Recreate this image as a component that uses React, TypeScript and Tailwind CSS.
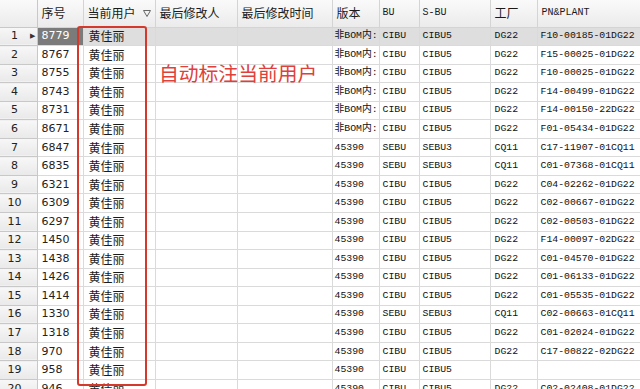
import React from 'react';

const rows: string[][] = [
  ['8779', '非BOM内:', 'CIBU', 'CIBU5', 'DG22', 'F10-00185-01DG22'],
  ['8767', '非BOM内:', 'CIBU', 'CIBU5', 'DG22', 'F15-00025-01DG22'],
  ['8755', '非BOM内:', 'CIBU', 'CIBU5', 'DG22', 'F10-00025-01DG22'],
  ['8743', '非BOM内:', 'CIBU', 'CIBU5', 'DG22', 'F14-00499-01DG22'],
  ['8731', '非BOM内:', 'CIBU', 'CIBU5', 'DG22', 'F14-00150-22DG22'],
  ['8671', '非BOM内:', 'CIBU', 'CIBU5', 'DG22', 'F01-05434-01DG22'],
  ['6847', '45390', 'SEBU', 'SEBU3', 'CQ11', 'C17-11907-01CQ11'],
  ['6835', '45390', 'SEBU', 'SEBU3', 'CQ11', 'C01-07368-01CQ11'],
  ['6321', '45390', 'CIBU', 'CIBU5', 'DG22', 'C04-02262-01DG22'],
  ['6309', '45390', 'CIBU', 'CIBU5', 'DG22', 'C02-00667-01DG22'],
  ['6297', '45390', 'CIBU', 'CIBU5', 'DG22', 'C02-00503-01DG22'],
  ['1450', '45390', 'CIBU', 'CIBU5', 'DG22', 'F14-00097-02DG22'],
  ['1438', '45390', 'CIBU', 'CIBU5', 'DG22', 'C01-04570-01DG22'],
  ['1426', '45390', 'CIBU', 'CIBU5', 'DG22', 'C01-06133-01DG22'],
  ['1414', '45390', 'CIBU', 'CIBU5', 'DG22', 'C01-05535-01DG22'],
  ['1330', '45390', 'SEBU', 'SEBU3', 'CQ11', 'C02-00663-01CQ11'],
  ['1318', '45390', 'CIBU', 'CIBU5', 'DG22', 'C01-02024-01DG22'],
  ['970', '45390', 'CIBU', 'CIBU5', 'DG22', 'C17-00822-02DG22'],
  ['958', '45390', 'CIBU', 'CIBU5', '', ''],
  ['946', '45390', 'CIBU', 'CIBU5', 'DG22', 'C02-02408-01DG22'],
];

const sans = "font-['Tahoma','DejaVu_Sans',sans-serif]";
const cjk = "font-['Noto_Sans_CJK_SC',sans-serif]";
const mono = "font-['Liberation_Mono','Noto_Sans_CJK_SC',monospace]";

export default function App() {
  return (
    <div className="relative w-[640px] h-[389px] overflow-hidden bg-white">
      <table className="table-fixed border-collapse w-[640px] leading-[14px]">
        <colgroup>
          <col className="w-[37px]" />
          <col className="w-[46px]" />
          <col className="w-[72px]" />
          <col className="w-[82px]" />
          <col className="w-[95px]" />
          <col className="w-[47px]" />
          <col className="w-[40px]" />
          <col className="w-[71px]" />
          <col className="w-[47px]" />
          <col className="w-[103px]" />
        </colgroup>
        <thead>
          <tr className={`h-[27px] bg-gradient-to-b from-[#fafafa] to-[#ebebeb] text-[12px] text-[#1a1a1a] ${cjk}`}>
            <th className="border-r border-b border-[#c8c8c8]" />
            <th className="border-r border-b border-[#d4d4d4] text-left font-normal pl-[4px]">序号</th>
            <th className="border-r border-b border-[#d4d4d4] text-left font-normal pl-[4px]">
              <div className="flex items-center justify-between pr-[4px]">
                <span>当前用户</span>
                <svg width="8" height="7" viewBox="0 0 8 7"><path d="M0.5 0.5 H7.5 L4 6.5 Z" fill="none" stroke="#666" strokeWidth="1" /></svg>
              </div>
            </th>
            <th className="border-r border-b border-[#d4d4d4] text-left font-normal pl-[4px]">最后修改人</th>
            <th className="border-r border-b border-[#d4d4d4] text-left font-normal pl-[4px]">最后修改时间</th>
            <th className="border-r border-b border-[#d4d4d4] text-left font-normal pl-[4px]">版本</th>
            <th className={`border-r border-b border-[#d4d4d4] text-left font-normal pl-[3px] text-[10px] ${mono}`}>BU</th>
            <th className={`border-r border-b border-[#d4d4d4] text-left font-normal pl-[3px] text-[10px] ${mono}`}>S-BU</th>
            <th className="border-r border-b border-[#d4d4d4] text-left font-normal pl-[4px]">工厂</th>
            <th className={`border-b border-[#d4d4d4] text-left font-normal pl-[4px] text-[10px] ${mono}`}>PN&amp;PLANT</th>
          </tr>
        </thead>
        <tbody>
          {rows.map((r, i) => {
            const sel = i === 0;
            return (
              <tr key={i} className={`h-[18.55px] ${sel ? 'bg-[#dedede]' : ''}`}>
                <td className={`p-0 border-r border-b border-[#c8c8c8] bg-gradient-to-b from-[#f7f7f7] to-[#e9e9e9] text-[11px] text-[#222] ${sans}`}>
                  <div className="relative flex items-center">
                    <span className="w-[29px] text-center">{i + 1}</span>
                    {sel && <span className="absolute left-[30px] text-[7px] text-[#333]">▶</span>}
                  </div>
                </td>
                <td className={`p-0 border-r border-b border-[#dadada] pl-[4px] text-[11px] ${sans} ${sel ? 'bg-[#7b7b7b] text-white' : 'text-[#222]'}`}>{r[0]}</td>
                <td className={`p-0 border-r border-b border-[#dadada] pl-[5px] text-[12px] text-[#1a1a1a] ${cjk}`}>黄佳丽</td>
                <td className="p-0 border-r border-b border-[#dadada]" />
                <td className="p-0 border-r border-b border-[#dadada]" />
                <td className={`p-0 border-r border-b border-[#dadada] pl-[2px] text-[9.8px] text-[#111] whitespace-nowrap overflow-hidden ${mono}`}>{r[1]}</td>
                <td className={`p-0 border-r border-b border-[#dadada] pl-[3px] text-[9.8px] text-[#111] ${mono}`}>{r[2]}</td>
                <td className={`p-0 border-r border-b border-[#dadada] pl-[3px] text-[9.8px] text-[#111] ${mono}`}>{r[3]}</td>
                <td className={`p-0 border-r border-b border-[#dadada] pl-[4px] text-[9.8px] text-[#111] ${mono}`}>{r[4]}</td>
                <td className={`p-0 border-b border-[#dadada] pl-[3px] text-[9.8px] text-[#111] whitespace-nowrap ${mono}`}>{r[5]}</td>
              </tr>
            );
          })}
        </tbody>
      </table>
      <div className="absolute left-[77px] top-[26px] w-[70px] h-[360px] border-2 border-[#d33a2c] rounded-[3px] pointer-events-none" />
      <div className={`absolute left-[159px] top-[60px] text-[19.8px] leading-[26px] text-[#e0403a] ${cjk}`}>自动标注当前用户</div>
    </div>
  );
}
